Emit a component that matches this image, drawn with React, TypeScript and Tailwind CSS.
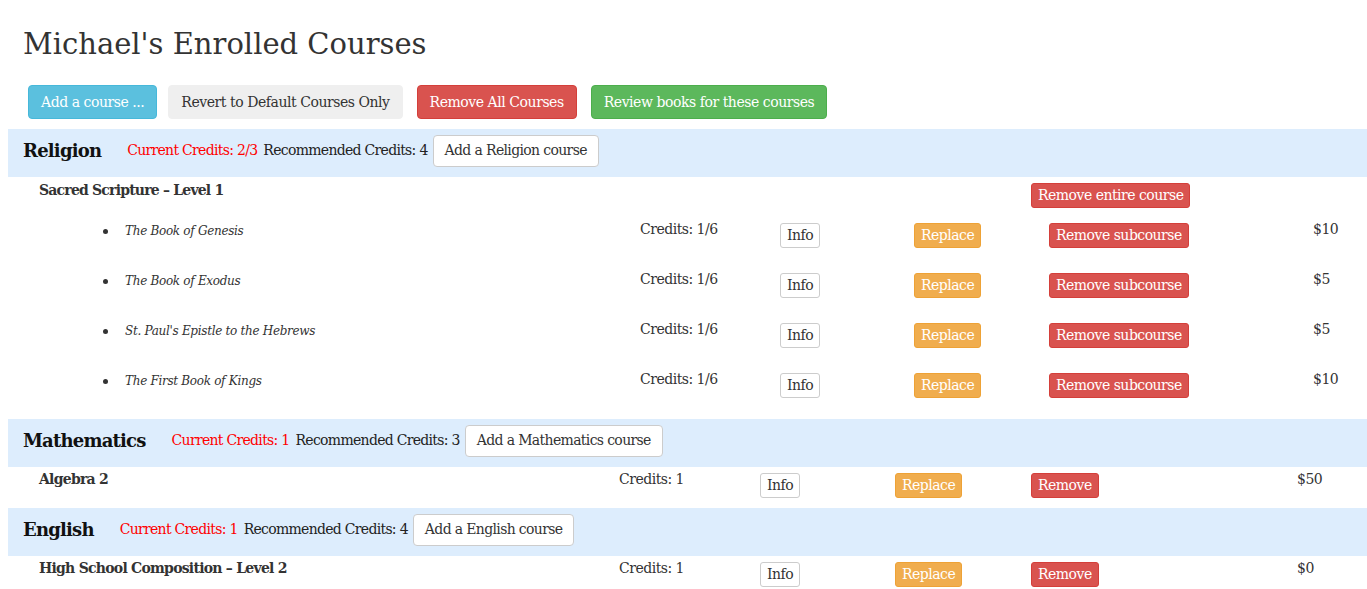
import React from "react";

type Sub = { title: string; credits: string; price: string };

const religionSubs: Sub[] = [
  { title: "The Book of Genesis", credits: "Credits: 1/6", price: "$10" },
  { title: "The Book of Exodus", credits: "Credits: 1/6", price: "$5" },
  { title: "St. Paul's Epistle to the Hebrews", credits: "Credits: 1/6", price: "$5" },
  { title: "The First Book of Kings", credits: "Credits: 1/6", price: "$10" },
];

const btnSm = "inline-block rounded-[3px] border px-[6px] h-[25px] leading-[23px] text-[14px] tracking-[-0.5px]";
const btn = "h-[34px] px-[12px] rounded-[4px] border text-[14px] tracking-[-0.45px]";

function SectionHeader({ name, current, recommended }: { name: string; current: string; recommended: string }) {
  return (
    <div className="flex items-center h-[48px] bg-[#ddedfd] pl-[15px] pb-[5px]">
      <h2 className="text-[18px] font-bold text-[#111] tracking-[-0.8px] mr-[26px]">{name}</h2>
      <span className="text-[14px] text-[#ff0000] tracking-[-0.7px] mr-[6px]">Current Credits: {current}</span>
      <span className="text-[14px] text-[#222] tracking-[-0.7px] mr-[5px]">Recommended Credits: {recommended}</span>
      <button className="h-[32px] px-[11px] bg-white border border-[#ccc] rounded-[4px] text-[14px] tracking-[-0.65px] text-[#333]">
        Add a {name} course
      </button>
    </div>
  );
}

function SingleRow({ title, price }: { title: string; price: string }) {
  return (
    <div className="flex h-[41px] text-[14px] text-[#333] tracking-[-0.5px]">
      <div className="w-[611px] pl-[31px] pt-[2px] font-bold tracking-[-0.75px]">{title}</div>
      <div className="w-[141px] pt-[2px]">Credits: 1</div>
      <div className="w-[135px] pt-[6px]">
        <button className={`${btnSm} bg-white border-[#ccc] text-[#333]`}>Info</button>
      </div>
      <div className="w-[136px] pt-[6px]">
        <button className={`${btnSm} bg-[#f0ad4e] border-[#eea236] text-white`}>Replace</button>
      </div>
      <div className="w-[266px] pt-[6px]">
        <button className={`${btnSm} bg-[#d9534f] border-[#d43f3a] text-white`}>Remove</button>
      </div>
      <div className="pt-[2px]">{price}</div>
    </div>
  );
}

export default function App() {
  return (
    <div className="min-h-screen bg-white pl-[8px] text-[#333]" style={{ fontFamily: '"DejaVu Serif", serif' }}>
      <h1 className="pl-[15px] pt-[24px] text-[29px] leading-[40px] text-[#333]">Michael's Enrolled Courses</h1>

      <div className="flex gap-[11px] pl-[20px] mt-[21px] mb-[10px]">
        <button className={`${btn} bg-[#5bc0de] border-[#46b8da] text-white`}>Add a course ...</button>
        <button className={`${btn} bg-[#efefef] border-[#efefef] text-[#333]`}>Revert to Default Courses Only</button>
        <button className={`${btn} ml-[3px] bg-[#d9534f] border-[#d43f3a] text-white`}>Remove All Courses</button>
        <button className={`${btn} ml-[3px] bg-[#5cb85c] border-[#4cae4c] text-white`}>
          Review books for these courses
        </button>
      </div>

      <SectionHeader name="Religion" current="2/3" recommended="4" />
      <div className="flex h-[35px] text-[14px]">
        <div className="w-[1023px] pl-[31px] pt-[3px] font-bold tracking-[-0.8px] text-[#333]">Sacred Scripture – Level 1</div>
        <div className="pt-[6px]">
          <button className={`${btnSm} bg-[#d9534f] border-[#d43f3a] text-white`}>Remove entire course</button>
        </div>
      </div>
      {religionSubs.map((s) => (
        <div key={s.title} className="flex h-[50px] text-[14px] text-[#333] tracking-[-0.5px]">
          <div className="w-[632px] pl-[95px] flex items-center h-[38px]">
            <span className="w-[5px] h-[5px] rounded-full bg-[#333] mr-[17px]" />
            <span className="italic text-[12px] tracking-[-0.3px]">{s.title}</span>
          </div>
          <div className="w-[140px] pt-[7px]">{s.credits}</div>
          <div className="w-[134px] pt-[11px]">
            <button className={`${btnSm} bg-white border-[#ccc] text-[#333]`}>Info</button>
          </div>
          <div className="w-[135px] pt-[11px]">
            <button className={`${btnSm} bg-[#f0ad4e] border-[#eea236] text-white`}>Replace</button>
          </div>
          <div className="w-[264px] pt-[11px]">
            <button className={`${btnSm} bg-[#d9534f] border-[#d43f3a] text-white`}>Remove subcourse</button>
          </div>
          <div className="pt-[7px]">{s.price}</div>
        </div>
      ))}
      <div className="h-[7px]" />

      <SectionHeader name="Mathematics" current="1" recommended="3" />
      <SingleRow title="Algebra 2" price="$50" />

      <SectionHeader name="English" current="1" recommended="4" />
      <SingleRow title="High School Composition – Level 2" price="$0" />
    </div>
  );
}
